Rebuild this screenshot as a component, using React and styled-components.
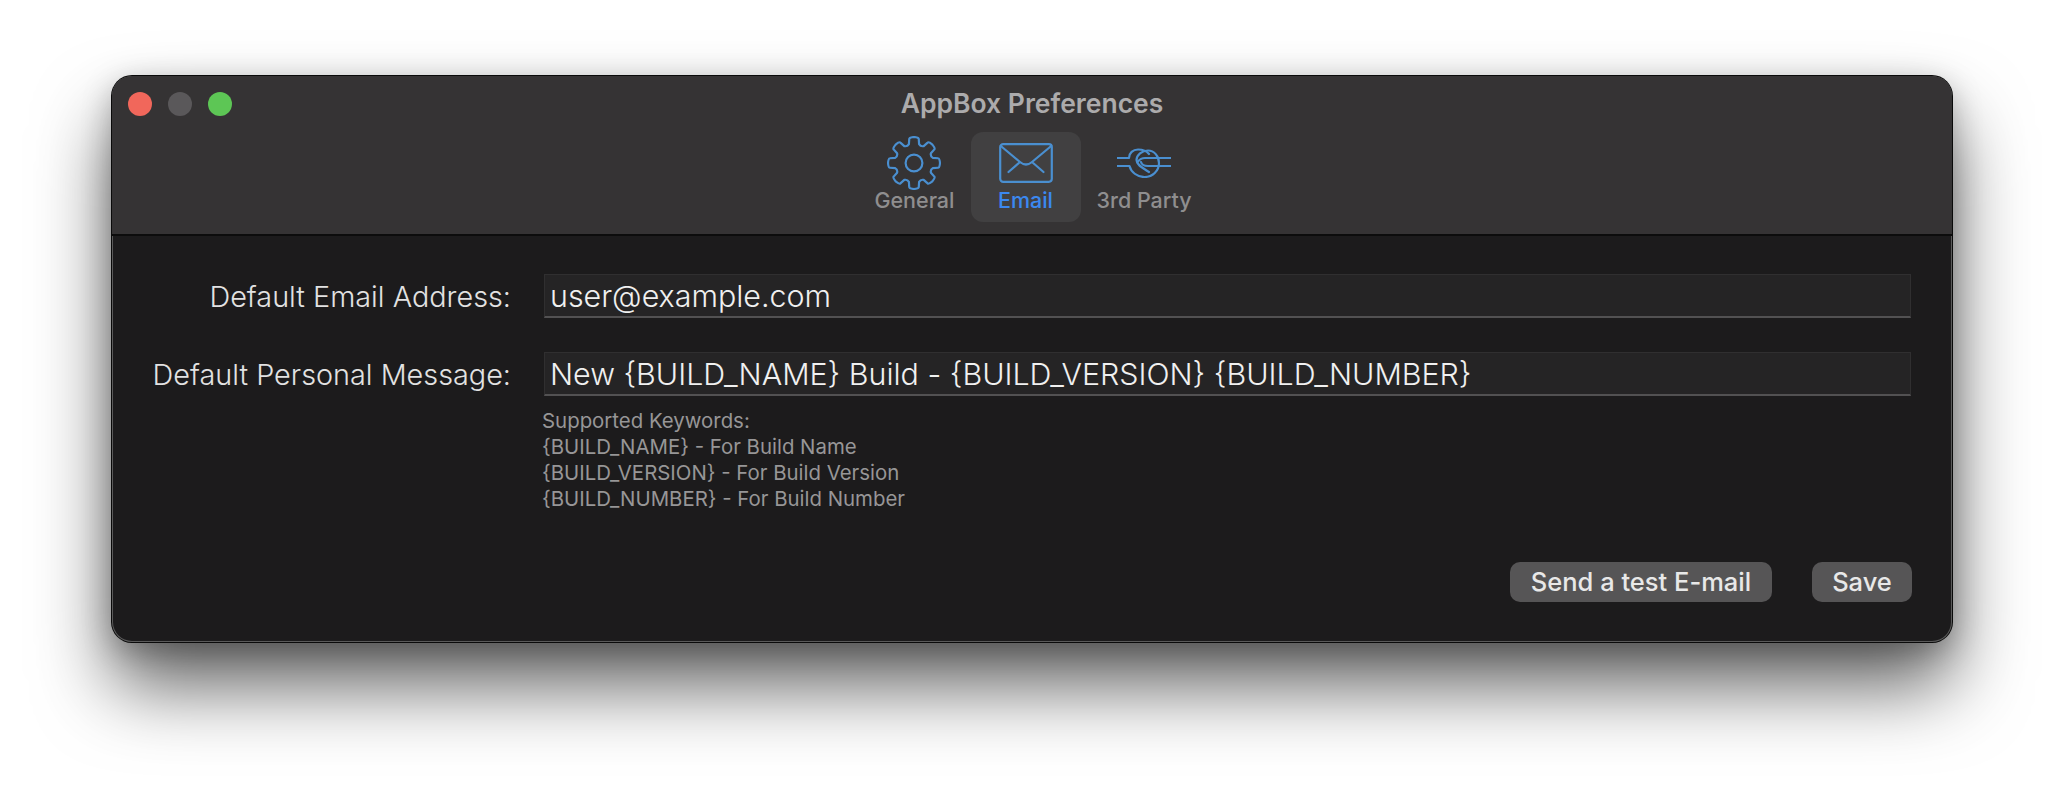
import React from 'react'
import styled, { createGlobalStyle } from 'styled-components'

const GlobalStyle = createGlobalStyle`
  html, body { margin: 0; background: #fff; }
  body { font-family: Inter, "Liberation Sans", sans-serif; }
`

const Page = styled.div`
  width: 2064px;
  height: 790px;
  padding: 76px 0 0 112px;
  box-sizing: border-box;
  overflow: hidden;
`

const Window = styled.div`
  width: 1840px;
  height: 566px;
  border-radius: 20px;
  overflow: hidden;
  display: flex;
  flex-direction: column;
  background: #1c1b1c;
  box-shadow: 0 0 0 1px #0a0a0a, inset 0 0 0 1px #5a5a5a, 0 44px 76px rgba(0, 0, 0, 0.62), 0 8px 30px rgba(0, 0, 0, 0.25);
`

const TitleBar = styled.div`
  height: 160px;
  flex: none;
  box-sizing: border-box;
  padding-top: 2px;
  background: #353334;
  border-bottom: 2px solid #0c0c0c;
  display: flex;
  flex-direction: column;
`

const TitleRow = styled.div`
  display: grid;
  grid-template-columns: 1fr auto 1fr;
  align-items: center;
  height: 50px;
  padding: 0 16px 0 16px;
`

const Lights = styled.div`
  display: flex;
  gap: 16px;
  margin-top: 2px;
`

const Light = styled.span`
  width: 24px;
  height: 24px;
  border-radius: 50%;
  background: ${p => p.$color};
`

const Title = styled.div`
  font-size: 26.5px;
  font-weight: 600;
  color: #acabac;
`

const Tabs = styled.div`
  display: flex;
  justify-content: center;
  gap: 8px;
  margin: 4px 0 0 2px;
`

const Tab = styled.div`
  box-sizing: border-box;
  width: ${p => (p.$active ? '110px' : 'auto')};
  height: 90px;
  padding: 4px 8px 0;
  border-radius: 12px;
  display: flex;
  flex-direction: column;
  align-items: center;
  background: ${p => (p.$active ? '#414041' : 'transparent')};
  color: ${p => (p.$active ? '#3b88f0' : '#8f8e8f')};
  font-size: 21.5px;
  font-weight: 500;
  line-height: 20px;
`

const IconSlot = styled.div`
  height: 54px;
  display: flex;
  align-items: center;
  justify-content: center;
`

const Body = styled.div`
  flex: 1;
  display: flex;
  flex-direction: column;
  padding: 38px 41px 40px 0;
`

const Form = styled.div`
  display: grid;
  grid-template-columns: 399px 1fr;
  column-gap: 33px;
  row-gap: 34px;
`

const Label = styled.div`
  text-align: right;
  align-self: center;
  font-size: 28.8px;
  font-weight: 300;
  color: #e2e2e2;
`

const Field = styled.div`
  height: 44px;
  box-sizing: border-box;
  padding: 0 5px;
  background: #252425;
  border: 1px solid #302f30;
  border-bottom: 2px solid #525152;
  display: flex;
  align-items: center;
  font-size: 30.4px;
  font-weight: 300;
  color: #f0f0f0;
`

const Help = styled.div`
  margin: 12px 0 0 430px;
  font-size: 20.4px;
  line-height: 26px;
  color: #979697;
`

const Actions = styled.div`
  margin: auto -1px 0 0;
  display: flex;
  justify-content: flex-end;
  gap: 40px;
`

const Button = styled.button`
  height: 40px;
  width: ${p => p.$width}px;
  border: 0;
  border-radius: 10px;
  background: #565556;
  color: #e8e8e8;
  font-family: inherit;
  font-size: 25.5px;
  font-weight: 500;
  padding: 0 0 2px;
`

const stroke = { fill: 'none', stroke: '#4a8fd0', strokeWidth: 2.2, strokeLinecap: 'round', strokeLinejoin: 'round' }

// gear outline, 8 rounded teeth
function gearPath() {
  const pts = []
  const n = 8
  for (let i = 0; i < n; i++) {
    const a = (i / n) * Math.PI * 2 - Math.PI / 2
    const w = 0.23
    const r1 = 19.5
    const r2 = 26
    const p = (r, t) => `${(27 + r * Math.cos(t)).toFixed(2)} ${(27 + r * Math.sin(t)).toFixed(2)}`
    pts.push(`${i === 0 ? 'M' : 'L'}${p(r1, a - w * 1.15)}`)
    pts.push(`L${p(r2 - 1.5, a - w * 0.85)}`)
    pts.push(`Q${p(r2, a - w * 0.8)} ${p(r2, a)}`)
    pts.push(`Q${p(r2, a + w * 0.8)} ${p(r2 - 1.5, a + w * 0.85)}`)
    pts.push(`L${p(r1, a + w * 1.15)}`)
    const m = a + Math.PI / n
    pts.push(`Q${p(r1 - 2, m)} ${p(r1, m + Math.PI / n - w * 1.15)}`)
  }
  return pts.join(' ') + 'Z'
}

const GearIcon = () => (
  <svg width="54" height="54" viewBox="0 0 54 54">
    <path d={gearPath()} {...stroke} />
    <circle cx="27" cy="27" r="8.4" {...stroke} />
  </svg>
)

const MailIcon = () => (
  <svg width="54" height="40" viewBox="0 0 54 40">
    <rect x="1.2" y="1.2" width="51.6" height="37.6" rx="3" {...stroke} />
    <path d="M1.8 3 L21 19 Q27 24 33 19 L52.2 3 M9.5 29 L21 19 M33 19 L44.5 29" {...stroke} />
  </svg>
)

const KnotIcon = () => (
  <svg width="54" height="30" viewBox="0 0 54 30">
    <path d="M0 10 H12 C12 5 16 1.5 21 1.5 C26 1.5 30 3.5 32 6" {...stroke} />
    <path d="M0 18 H12.5 C14 24 20 29 27.5 29 C35.5 29 42 23 42 15 C42 8 37 2.5 31 2.5 C25 2.5 19.5 7 19.5 12 C19.5 17 26 20 32 24" {...stroke} />
    <path d="M54 10 H28 C24.5 10 22.5 11.5 21 13.5" {...stroke} />
    <path d="M54 18 H31 C27 18 24.5 16 24 14" {...stroke} />
  </svg>
)

const tabs = [
  { name: 'General', icon: <GearIcon /> },
  { name: 'Email', icon: <MailIcon />, active: true },
  { name: '3rd Party', icon: <KnotIcon /> },
]

const keywords = [
  'Supported Keywords:',
  '{BUILD_NAME} - For Build Name',
  '{BUILD_VERSION} - For Build Version',
  '{BUILD_NUMBER} - For Build Number',
]

export default function App() {
  return (
    <Page>
      <GlobalStyle />
      <Window>
        <TitleBar>
          <TitleRow>
            <Lights>
              <Light $color="#f1675b" />
              <Light $color="#5a585a" />
              <Light $color="#5dc655" />
            </Lights>
            <Title>AppBox Preferences</Title>
          </TitleRow>
          <Tabs>
            {tabs.map(t => (
              <Tab key={t.name} $active={t.active}>
                <IconSlot>{t.icon}</IconSlot>
                {t.name}
              </Tab>
            ))}
          </Tabs>
        </TitleBar>
        <Body>
          <Form>
            <Label>Default Email Address:</Label>
            <Field>user@example.com</Field>
            <Label>Default Personal Message:</Label>
            <Field>{'New {BUILD_NAME} Build - {BUILD_VERSION} {BUILD_NUMBER}'}</Field>
          </Form>
          <Help>
            {keywords.map(k => <div key={k}>{k}</div>)}
          </Help>
          <Actions>
            <Button $width={262}>Send a test E-mail</Button>
            <Button $width={100}>Save</Button>
          </Actions>
        </Body>
      </Window>
    </Page>
  )
}
